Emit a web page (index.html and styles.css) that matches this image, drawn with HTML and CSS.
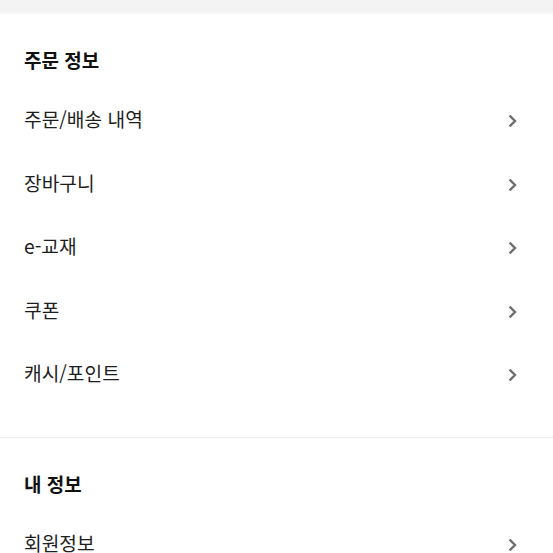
FILE: index.html
```html
<!DOCTYPE html>
<html lang="ko">
<head>
    <meta charset="UTF-8">
    <meta name="viewport" content="width=device-width, initial-scale=1.0">
    <title>마이페이지</title>
    <link rel="stylesheet" href="styles.css">
</head>
<body>
    <div class="top-bar"></div>

    <section class="menu-section">
        <h2 class="section-title">주문 정보</h2>
        <ul class="menu-list">
            <li class="menu-item"><span>주문/배송 내역</span><svg class="chevron" viewBox="0 0 9 14"><polyline points="1.6,1.6 7,7 1.6,12.4"/></svg></li>
            <li class="menu-item"><span>장바구니</span><svg class="chevron" viewBox="0 0 9 14"><polyline points="1.6,1.6 7,7 1.6,12.4"/></svg></li>
            <li class="menu-item"><span>e-교재</span><svg class="chevron" viewBox="0 0 9 14"><polyline points="1.6,1.6 7,7 1.6,12.4"/></svg></li>
            <li class="menu-item"><span>쿠폰</span><svg class="chevron" viewBox="0 0 9 14"><polyline points="1.6,1.6 7,7 1.6,12.4"/></svg></li>
            <li class="menu-item"><span>캐시/포인트</span><svg class="chevron" viewBox="0 0 9 14"><polyline points="1.6,1.6 7,7 1.6,12.4"/></svg></li>
        </ul>
    </section>

    <section class="menu-section">
        <h2 class="section-title">내 정보</h2>
        <ul class="menu-list">
            <li class="menu-item"><span>회원정보</span><svg class="chevron" viewBox="0 0 9 14"><polyline points="1.6,1.6 7,7 1.6,12.4"/></svg></li>
        </ul>
    </section>
</body>
</html>
```

FILE: styles.css
```css
/* my page menu */
body {
    margin: 0;
    background-color: #fff;
    font-family: "Noto Sans CJK KR", "Noto Sans", sans-serif;
    color: #1e1e1e;
    overflow: hidden;
}

.top-bar {
    height: 14px;
    background: linear-gradient(#f3f3f3, #f3f3f3 70%, #f8f8f8);
}

.menu-section {
    padding: 28px 36px 32px 24px;
    border-bottom: 1px solid #ececec;
}

.section-title {
    margin: 0 0 9.5px;
    height: 36px;
    line-height: 36px;
    font-size: 19px;
    font-weight: 700;
    color: #111;
}

.menu-list {
    list-style: none;
    margin: 0;
    padding: 0;
}

.menu-item {
    display: flex;
    align-items: center;
    justify-content: space-between;
    height: 63.5px;
    font-size: 19.2px;
    cursor: pointer;
}

.chevron {
    width: 9px;
    height: 14px;
    margin-top: 4px;
    fill: none;
    stroke: #6e6e6e;
    stroke-width: 2.4;
}
```
